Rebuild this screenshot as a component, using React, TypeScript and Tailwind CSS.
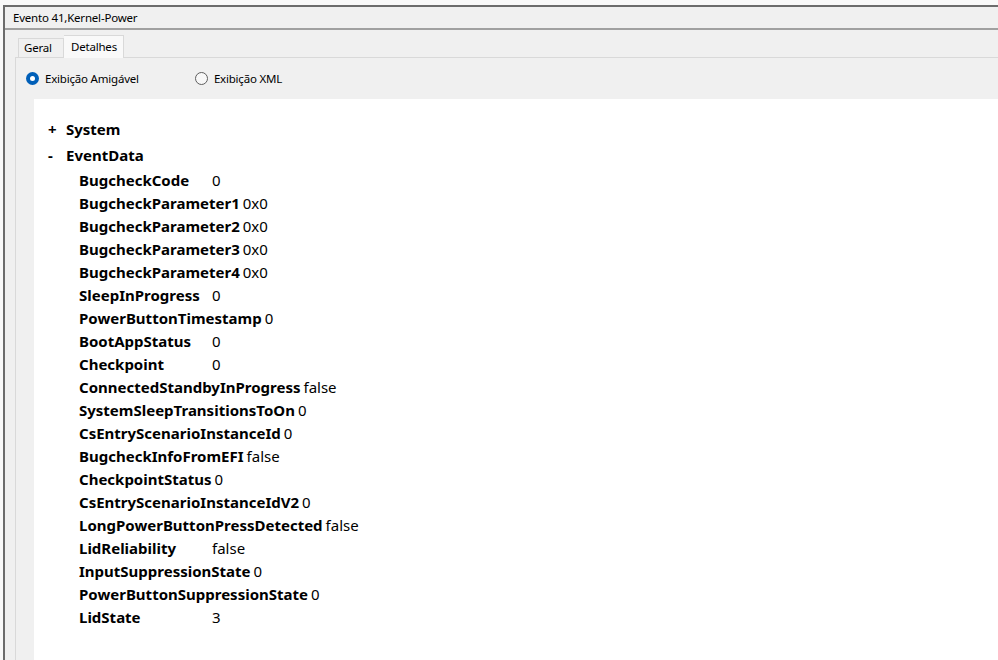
import React from "react";

const rows: [string, string][] = [
  ["BugcheckCode", "0"],
  ["BugcheckParameter1", "0x0"],
  ["BugcheckParameter2", "0x0"],
  ["BugcheckParameter3", "0x0"],
  ["BugcheckParameter4", "0x0"],
  ["SleepInProgress", "0"],
  ["PowerButtonTimestamp", "0"],
  ["BootAppStatus", "0"],
  ["Checkpoint", "0"],
  ["ConnectedStandbyInProgress", "false"],
  ["SystemSleepTransitionsToOn", "0"],
  ["CsEntryScenarioInstanceId", "0"],
  ["BugcheckInfoFromEFI", "false"],
  ["CheckpointStatus", "0"],
  ["CsEntryScenarioInstanceIdV2", "0"],
  ["LongPowerButtonPressDetected", "false"],
  ["LidReliability", "false"],
  ["InputSuppressionState", "0"],
  ["PowerButtonSuppressionState", "0"],
  ["LidState", "3"],
];

function Radio({ checked, label }: { checked?: boolean; label: string }) {
  return (
    <label className="flex items-center gap-[6px]">
      {checked ? (
        <span className="w-[13px] h-[13px] rounded-full bg-[#005fb8] flex items-center justify-center">
          <span className="w-[5px] h-[5px] rounded-full bg-white" />
        </span>
      ) : (
        <span className="w-[13px] h-[13px] rounded-full border border-[#5e5e5e] bg-[#f7f7f7]" />
      )}
      <span>{label}</span>
    </label>
  );
}

export default function App() {
  return (
    <div
      className="w-[998px] h-[660px] overflow-hidden bg-[#f9f9f9] flex flex-col text-black"
      style={{ fontFamily: '"Noto Sans", "Open Sans", sans-serif' }}
    >
      <div className="h-[5px] shrink-0" />
      <div className="flex flex-1 min-h-0">
        <div className="w-[3px] shrink-0" />
        {/* window */}
        <div className="flex-1 flex flex-col border-l-2 border-t-2 border-[#6c6c6c] bg-[#f0f0f0] min-w-0">
          <div className="h-[23px] shrink-0 flex items-center pl-[8px] text-[11.5px] tracking-[-0.2px] border-b-2 border-[#a0a0a0]">
            Evento 41,Kernel-Power
          </div>

          <div className="flex-1 flex flex-col pl-[10px] pt-[5px] min-h-0">
            {/* tabs */}
            <div className="flex items-end h-[22px] pl-[3px] text-[11.5px] tracking-[-0.2px] relative z-10">
              <div className="h-[19px] w-[46px] border border-b-0 border-[#d9d9d9] bg-[#f0f0f0] pl-[5px] flex items-center">
                Geral
              </div>
              <div className="h-[23px] w-[60px] -mb-[1px] border border-b-0 border-l-0 border-[#d9d9d9] bg-[#f9f9f9] pl-[7px] pt-[2px]">
                Detalhes
              </div>
            </div>

            {/* tab panel */}
            <div className="flex-1 flex flex-col border-l border-t border-[#d9d9d9] bg-[#f0f0f0] min-h-0">
              <div className="h-[41px] shrink-0 flex items-center gap-[56px] pl-[10px] text-[11.5px] tracking-[-0.2px]">
                <Radio checked label="Exibição Amigável" />
                <Radio label="Exibição XML" />
              </div>

              <div className="flex-1 ml-[18px] bg-white pt-[17px] pl-[14px]">
                <div className="h-[26px] flex items-center text-[15px] font-bold">
                  <span className="w-[18px]">+</span>
                  <span>System</span>
                </div>
                <div className="h-[27px] flex items-center text-[15px] font-bold">
                  <span className="w-[18px]">-</span>
                  <span>EventData</span>
                </div>
                <div className="pl-[31px] text-[15px]">
                  {rows.map(([name, value]) => (
                    <div key={name} className="h-[23px] flex items-center whitespace-nowrap">
                      <span className="font-bold min-w-[130px]">{name}</span>
                      <span className="ml-[3px]">{value}</span>
                    </div>
                  ))}
                </div>
              </div>
            </div>
          </div>
        </div>
      </div>
    </div>
  );
}
